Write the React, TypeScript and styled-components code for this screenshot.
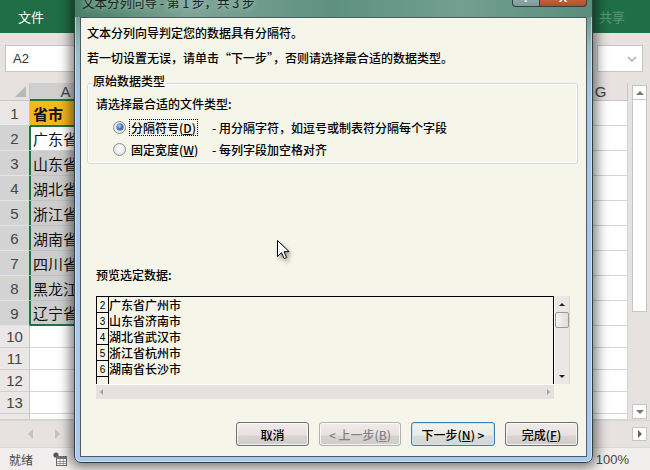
import React from 'react';
import styled, { createGlobalStyle, css } from 'styled-components';

const CJK = `"Noto Sans CJK SC", "Noto Sans", sans-serif`;
const LATIN = `"Liberation Sans", "Noto Sans CJK SC", sans-serif`;
const GREEN = '#217346';

const GlobalStyle = createGlobalStyle`
  html, body { margin: 0; padding: 0; background: #e7e2e0; }
  body { font-family: ${CJK}; overflow: hidden; }
  * { box-sizing: border-box; }
`;

const Screen = styled.div`
  position: relative;
  width: 650px;
  height: 470px;
  overflow: hidden;
  display: flex;
  flex-direction: column;
  background: #e7e2e0;
`;

/* ---------- Excel window ---------- */
const TabBar = styled.div`
  height: 33px;
  flex: none;
  background: #1f6e45;
  display: flex;
  align-items: center;
  padding: 0 25px 0 18px;
`;
const FileTab = styled.span`
  color: #fff;
  font-size: 13px;
  line-height: 16px;
`;
const ShareButton = styled.span`
  margin-left: auto;
  color: #5d977a;
  font-size: 13px;
`;

const FormulaBar = styled.div`
  height: 50px;
  flex: none;
  display: flex;
  align-items: flex-start;
  padding: 12px 7px 0 5px;
`;
const NameBox = styled.div`
  width: 95px;
  height: 27px;
  background: #fff;
  border: 1px solid #c6c6c6;
  font: 13px/25px ${LATIN};
  color: #333;
  padding-left: 7px;
`;
const FormulaBox = styled.div`
  margin-left: auto;
  width: 46px;
  height: 27px;
  background: #fff;
  border: 1px solid #c6c6c6;
  display: flex;
  align-items: center;
  justify-content: flex-end;
  padding-right: 5px;
`;

const SheetArea = styled.div`
  height: 337px;
  flex: none;
  display: flex;
`;
const Grid = styled.div`
  display: grid;
  grid-template-columns: 30px 72px 472px 54px;
  grid-template-rows: 18px repeat(9, 25px) repeat(4, 22px) 6px;
  background: #fff;
  overflow: hidden;
`;
const Corner = styled.div`
  background: #e7e2e0;
  border-right: 1px solid #c6c6c6;
  border-bottom: 1px solid #c6c6c6;
  display: flex;
  align-items: flex-end;
  justify-content: flex-end;
  padding: 0 3px 3px 0;
  &::after {
    content: '';
    width: 0;
    height: 0;
    border-left: 11px solid transparent;
    border-bottom: 11px solid #b8b8b8;
  }
`;
const ColHead = styled.div<{ $sel?: boolean }>`
  background: ${(p) => (p.$sel ? '#cfcfcf' : '#e7e2e0')};
  border-right: 1px solid #c6c6c6;
  border-bottom: ${(p) => (p.$sel ? `2px solid ${GREEN}` : '1px solid #c6c6c6')};
  font: 15px/1 ${LATIN};
  color: #444;
  display: flex;
  align-items: center;
  justify-content: center;
`;
const RowHead = styled.div<{ $sel?: boolean }>`
  background: ${(p) => (p.$sel ? '#d3d3d3' : '#ebe7e6')};
  border-right: 1px solid ${(p) => (p.$sel ? GREEN : '#c6c6c6')};
  border-bottom: 1px solid ${(p) => (p.$sel ? '#e4e4e4' : '#d0d0d0')};
  font: 15px/1 ${LATIN};
  color: #444;
  display: flex;
  align-items: center;
  justify-content: center;
`;
const Cell = styled.div<{ $tone?: 'plain' | 'title' | 'sel'; $selEdge?: 'top' | 'mid' | 'bottom' }>`
  border-right: 1px solid #d4d4d4;
  border-bottom: 1px solid #d4d4d4;
  background: #fff;
  font: 15px/1 ${CJK};
  color: #111;
  display: flex;
  align-items: center;
  padding-left: 3px;
  white-space: nowrap;
  overflow: hidden;
  ${(p) =>
    p.$tone === 'title' &&
    css`
      background: #f4b71c;
      font-weight: 700;
    `}
  ${(p) =>
    p.$tone === 'sel' &&
    css`
      background: #cdcdcd;
      border-bottom-color: #c0c0c0;
    `}
  ${(p) =>
    p.$selEdge === 'top' &&
    css`
      box-shadow: inset 1px 0 0 ${GREEN}, inset 0 1px 0 ${GREEN};
      border-top: 1px solid ${GREEN};
      margin-top: -1px;
    `}
  ${(p) =>
    p.$selEdge === 'mid' &&
    css`
      box-shadow: inset 1px 0 0 ${GREEN};
    `}
  ${(p) =>
    p.$selEdge === 'bottom' &&
    css`
      box-shadow: inset 1px 0 0 ${GREEN};
      border-bottom: 2px solid ${GREEN};
    `}
`;

const ExcelVScroll = styled.div`
  width: 22px;
  flex: none;
  display: flex;
  flex-direction: column;
  padding: 2px 3px 1px 4px;
`;
const ScrollBox = styled.div`
  width: 15px;
  height: 15px;
  background: #fdfdfd;
  border: 1px solid #c6c6c6;
  display: flex;
  align-items: center;
  justify-content: center;
`;
const ExcelThumb = styled.div`
  width: 15px;
  height: 212px;
  background: #fff;
  border: 1px solid #c6c6c6;
  border-top: none;
`;
const Spacer = styled.div`
  flex: 1;
`;

const Arrow = styled.span<{ $dir: 'up' | 'down' | 'left' | 'right'; $color?: string; $size?: number }>`
  width: 0;
  height: 0;
  display: block;
  ${(p) => {
    const s = p.$size ?? 4;
    const c = p.$color ?? '#666';
    switch (p.$dir) {
      case 'up':
        return css`border-left: ${s}px solid transparent; border-right: ${s}px solid transparent; border-bottom: ${s}px solid ${c};`;
      case 'down':
        return css`border-left: ${s}px solid transparent; border-right: ${s}px solid transparent; border-top: ${s}px solid ${c};`;
      case 'left':
        return css`border-top: ${s}px solid transparent; border-bottom: ${s}px solid transparent; border-right: ${s}px solid ${c};`;
      default:
        return css`border-top: ${s}px solid transparent; border-bottom: ${s}px solid transparent; border-left: ${s}px solid ${c};`;
    }
  }}
`;

const SheetTabBar = styled.div`
  height: 27px;
  flex: none;
  display: flex;
  align-items: center;
  padding: 0 3px 0 28px;
  gap: 22px;
  border-top: 1px solid #d8d4d2;
`;
const SheetRightBox = styled(ScrollBox)`
  margin-left: auto;
  height: 14px;
`;

const StatusBar = styled.div`
  height: 23px;
  flex: none;
  background: #f1eeed;
  border-top: 1px solid #dcd8d6;
  display: flex;
  align-items: center;
  padding: 0 21px 0 9px;
  font-size: 12px;
  color: #444;
`;
const StatusIcon = styled.svg`
  margin-left: 20px;
`;
const Zoom = styled.span`
  margin-left: auto;
  font: 13px ${LATIN};
  color: #444;
`;

/* ---------- Dialog ---------- */
const Dialog = styled.div`
  position: absolute;
  left: 74px;
  top: -12px;
  width: 519px;
  height: 475px;
  display: flex;
  flex-direction: column;
  border: 1px solid #2e3f44;
  border-radius: 7px;
  background: linear-gradient(
    180deg,
    #4f856e 0px,
    #6a998a 24px,
    #9bbcc6 60px,
    #a6c6ea 110px,
    #a9c9ee 100%
  );
  box-shadow: 0 0 12px 4px rgba(0, 0, 0, 0.5), inset 0 0 0 1px rgba(255, 255, 255, 0.45);
`;
const DialogTitle = styled.div`
  height: 28px;
  flex: none;
  display: flex;
  align-items: flex-start;
  padding: 0 5px 0 7px;
  border-radius: 6px 6px 0 0;
  background: linear-gradient(90deg, #467e66 0%, #7ea497 22%, #5f9180 50%, #739f90 75%, #5a8d7b 100%);
`;
const TitleText = styled.span`
  margin-top: 6px;
  font-size: 12.5px;
  line-height: 16px;
  color: #14231f;
  text-shadow: 0 0 6px rgba(225, 240, 232, 0.8);
  white-space: nowrap;
`;
const TitleButtons = styled.div`
  margin-left: auto;
  display: flex;
`;
const CaptionButton = styled.div<{ $close?: boolean }>`
  height: 18px;
  width: ${(p) => (p.$close ? 47 : 28)}px;
  border: 1px solid #33403e;
  border-top: none;
  display: flex;
  align-items: flex-end;
  justify-content: center;
  color: #fff;
  font: bold 12px/1 ${LATIN};
  padding-bottom: 2px;
  ${(p) =>
    p.$close
      ? css`
          background: linear-gradient(180deg, #e3a07e, #c0653f 60%, #a9502e);
          border-radius: 0 0 4px 0;
          border-left: none;
        `
      : css`
          background: linear-gradient(180deg, #a9c2bd, #7c9b95);
          border-radius: 0 0 0 4px;
        `}
`;

const Client = styled.div`
  flex: 1;
  margin: 0 5px 5px;
  background: #f5f5e9;
  border: 1px solid #4b5c63;
  padding: 5px 8px 0 6px;
  display: flex;
  flex-direction: column;
  font-weight: 500;
  color: #000;
`;
const Para = styled.div<{ $mt?: number }>`
  font-size: 12px;
  line-height: 20px;
  height: 20px;
  margin-top: ${(p) => p.$mt ?? 0}px;
  white-space: nowrap;
`;
const GroupBox = styled.div`
  position: relative;
  margin-top: 15px;
  width: 491px;
  height: 81px;
  border: 1px solid #cfdbe1;
  border-radius: 3px;
  box-shadow: inset 0 0 0 1px #ffffff;
  padding: 10px 0 0 8px;
`;
const Legend = styled.span`
  position: absolute;
  top: -10px;
  left: 4px;
  padding: 0 1px;
  background: #f5f5e9;
  font-size: 12px;
  line-height: 14px;
`;
const Prompt = styled.div`
  font-size: 12px;
  line-height: 20px;
  height: 20px;
`;
const RadioRow = styled.div<{ $first?: boolean }>`
  height: 22px;
  margin-top: ${(p) => (p.$first ? 2 : 0)}px;
  display: flex;
  align-items: center;
  padding-left: 17px;
  font-size: 12px;
  white-space: nowrap;
`;
const Radio = styled.span<{ $checked?: boolean }>`
  width: 13px;
  height: 13px;
  flex: none;
  border-radius: 50%;
  border: 1px solid #8e8f8f;
  background: radial-gradient(circle at 50% 40%, #ffffff 0%, #efefef 45%, #d2d2d2 100%);
  display: flex;
  align-items: center;
  justify-content: center;
  margin-right: 3px;
  &::after {
    content: '';
    display: ${(p) => (p.$checked ? 'block' : 'none')};
    width: 6px;
    height: 6px;
    border-radius: 50%;
    background: radial-gradient(circle at 40% 35%, #b4dcfb 0%, #3276c0 50%, #17407a 100%);
    box-shadow: 0 0 0 0.5px #1c3f6a;
  }
`;
const LabelCell = styled.span`
  width: 83px;
  flex: none;
  display: flex;
`;
const RadioLabel = styled.span<{ $focus?: boolean }>`
  line-height: 15px;
  padding: 0 1px;
  border: 1px dotted ${(p) => (p.$focus ? '#000' : 'transparent')};
`;
const Desc = styled.span``;

const PreviewLabel = styled.div`
  margin: 101px 0 0 9px;
  font-size: 12px;
  line-height: 20px;
  height: 20px;
`;
const Preview = styled.div`
  margin: 11px 0 0 9px;
  width: 474px;
  height: 103px;
  display: grid;
  grid-template-columns: 458px 16px;
  grid-template-rows: 88px 15px;
`;
const DataArea = styled.div`
  border: 1px solid #000;
  border-bottom: none;
  overflow: hidden;
  background: #f5f5e9;
`;
const DataRow = styled.div`
  display: flex;
  height: 16px;
`;
const RowNum = styled.div`
  width: 12px;
  flex: none;
  border-right: 1px solid #000;
  border-bottom: 1px solid #000;
  font: 10px/1 ${LATIN};
  display: flex;
  align-items: flex-end;
  justify-content: center;
  padding-bottom: 1px;
`;
const DataText = styled.div`
  font-size: 12px;
  line-height: 16px;
  white-space: nowrap;
`;
const HScroll = styled.div`
  background: #e6e0de;
  border-top: 1px solid #fff;
  display: flex;
  align-items: center;
  justify-content: space-between;
  padding: 0 4px 0 4px;
`;
const VScroll = styled.div`
  background: #ebe7e4;
  border-left: 1px solid #fff;
  border-right: 1px solid #dcd8d6;
  display: flex;
  flex-direction: column;
  align-items: center;
  padding: 7px 0 6px;
`;
const VThumb = styled.div`
  width: 14px;
  height: 16px;
  margin-top: 6px;
  border: 1px solid #9a9a9a;
  border-radius: 2px;
  background: linear-gradient(90deg, #f4f4f4, #dcdcdc);
`;
const ScrollCorner = styled.div`
  background: #f5f5e9;
`;

const ButtonRow = styled.div`
  margin-top: 23px;
  display: flex;
  justify-content: flex-end;
  gap: 10px;
`;
const Button = styled.button<{ $w: number; $variant?: 'default' | 'disabled' }>`
  width: ${(p) => p.$w}px;
  height: 24px;
  padding: 0;
  border-radius: 3px;
  border: 1px solid #707070;
  background: linear-gradient(180deg, #f0ecea 0%, #e7e2e0 55%, #d6d3d1 60%, #cfcccb 100%);
  box-shadow: inset 0 0 0 1px rgba(255, 255, 255, 0.75);
  font-family: ${CJK};
  font-weight: 500;
  font-size: 12px;
  color: #000;
  display: flex;
  align-items: center;
  justify-content: center;
  white-space: nowrap;
  ${(p) =>
    p.$variant === 'default' &&
    css`
      border-color: #3c7fb1;
      background: linear-gradient(180deg, #f3f3ed 0%, #ebebe6 55%, #dbdcdc 60%, #d4d6d8 100%);
      box-shadow: inset 0 0 0 1px #c4e5f6;
    `}
  ${(p) =>
    p.$variant === 'disabled' &&
    css`
      border-color: #adb2b5;
      color: #838383;
    `}
`;

const Cursor = styled.svg`
  position: absolute;
  left: 277px;
  top: 240px;
  filter: drop-shadow(2px 3px 2px rgba(0, 0, 0, 0.35));
`;

const provinces = ['广东省', '山东省', '湖北省', '浙江省', '湖南省', '四川省', '黑龙江', '辽宁省'];
const previewRows = [
  { n: '2', t: '广东省广州市' },
  { n: '3', t: '山东省济南市' },
  { n: '4', t: '湖北省武汉市' },
  { n: '5', t: '浙江省杭州市' },
  { n: '6', t: '湖南省长沙市' },
  { n: '', t: '' },
];

type Row = {
  n: string;
  text?: string;
  tone?: 'plain' | 'title' | 'sel';
  sel?: boolean;
  edge?: 'top' | 'mid' | 'bottom';
};

export default function App() {
  const rows: Row[] = [
    { n: '1', text: '省市', tone: 'title' },
    ...provinces.map<Row>((p, i) => ({
      n: String(i + 2),
      text: p,
      tone: i === 0 ? 'plain' : 'sel',
      sel: true,
      edge: i === 0 ? 'top' : i === provinces.length - 1 ? 'bottom' : 'mid',
    })),
    { n: '10' },
    { n: '11' },
    { n: '12' },
    { n: '13' },
    { n: '' },
  ];

  return (
    <Screen>
      <GlobalStyle />
      <TabBar>
        <FileTab>文件</FileTab>
        <ShareButton>共享</ShareButton>
      </TabBar>
      <FormulaBar>
        <NameBox>A2</NameBox>
        <FormulaBox>
          <svg width="10" height="6" viewBox="0 0 10 6">
            <path d="M1 1 L5 5 L9 1" fill="none" stroke="#a8a8a8" strokeWidth="1.4" />
          </svg>
        </FormulaBox>
      </FormulaBar>
      <SheetArea>
        <Grid>
          <Corner />
          <ColHead $sel>A</ColHead>
          <ColHead />
          <ColHead>G</ColHead>
          {rows.map((r, i) => (
            <React.Fragment key={i}>
              <RowHead $sel={r.sel}>{r.n}</RowHead>
              <Cell $tone={r.tone} $selEdge={r.edge}>
                {r.text}
              </Cell>
              <Cell />
              <Cell />
            </React.Fragment>
          ))}
        </Grid>
        <ExcelVScroll>
          <ScrollBox>
            <Arrow $dir="up" $color="#777" $size={4} />
          </ScrollBox>
          <ExcelThumb />
          <Spacer />
          <ScrollBox>
            <Arrow $dir="down" $color="#777" $size={4} />
          </ScrollBox>
        </ExcelVScroll>
      </SheetArea>
      <SheetTabBar>
        <Arrow $dir="left" $color="#c2c2c2" $size={5} />
        <Arrow $dir="right" $color="#c2c2c2" $size={5} />
        <SheetRightBox>
          <Arrow $dir="right" $color="#666" $size={4} />
        </SheetRightBox>
      </SheetTabBar>
      <StatusBar>
        <span>就绪</span>
        <StatusIcon width="14" height="14" viewBox="0 0 14 14">
          <circle cx="3" cy="3" r="2.6" fill="#555" />
          <rect x="3.5" y="4.5" width="10" height="9" fill="#fff" stroke="#666" />
          <rect x="3.5" y="4.5" width="10" height="2.5" fill="#777" />
          <path d="M3.5 9.5h10M3.5 11.5h10M7 7v6.5M10.3 7v6.5" stroke="#888" strokeWidth="0.8" />
        </StatusIcon>
        <Zoom>100%</Zoom>
      </StatusBar>

      <Dialog>
        <DialogTitle>
          <TitleText>文本分列向导 - 第 1 步，共 3 步</TitleText>
          <TitleButtons>
            <CaptionButton>?</CaptionButton>
            <CaptionButton $close>X</CaptionButton>
          </TitleButtons>
        </DialogTitle>
        <Client>
          <Para>文本分列向导判定您的数据具有分隔符。</Para>
          <Para $mt={5}>若一切设置无误，请单击“下一步”，否则请选择最合适的数据类型。</Para>
          <GroupBox>
            <Legend>原始数据类型</Legend>
            <Prompt>请选择最合适的文件类型:</Prompt>
            <RadioRow $first>
              <Radio $checked />
              <LabelCell>
                <RadioLabel $focus>
                  分隔符号(<u>D</u>)
                </RadioLabel>
              </LabelCell>
              <Desc>- 用分隔字符，如逗号或制表符分隔每个字段</Desc>
            </RadioRow>
            <RadioRow>
              <Radio />
              <LabelCell>
                <RadioLabel>
                  固定宽度(<u>W</u>)
                </RadioLabel>
              </LabelCell>
              <Desc>- 每列字段加空格对齐</Desc>
            </RadioRow>
          </GroupBox>
          <PreviewLabel>预览选定数据:</PreviewLabel>
          <Preview>
            <DataArea>
              {previewRows.map((r, i) => (
                <DataRow key={i}>
                  <RowNum>{r.n}</RowNum>
                  <DataText>{r.t}</DataText>
                </DataRow>
              ))}
            </DataArea>
            <VScroll>
              <Arrow $dir="up" $color="#222" $size={3.5} />
              <VThumb />
              <Spacer />
              <Arrow $dir="down" $color="#222" $size={3.5} />
            </VScroll>
            <HScroll>
              <Arrow $dir="left" $color="#a0a0a0" $size={3.5} />
              <Arrow $dir="right" $color="#a0a0a0" $size={3.5} />
            </HScroll>
            <ScrollCorner />
          </Preview>
          <ButtonRow>
            <Button $w={73}>取消</Button>
            <Button $w={82} $variant="disabled">
              &lt; 上一步(<u>B</u>)
            </Button>
            <Button $w={84} $variant="default">
              下一步(<u>N</u>) &gt;
            </Button>
            <Button $w={73}>
              完成(<u>F</u>)
            </Button>
          </ButtonRow>
        </Client>
      </Dialog>

      <Cursor width="16" height="22" viewBox="0 0 16 22">
        <path
          d="M0.5 0.5 V16.5 L4.5 12.6 L7.2 18.6 L9.6 17.5 L7 11.7 H12.2 Z"
          fill="#fff"
          stroke="#000"
          strokeWidth="1"
          strokeLinejoin="miter"
        />
      </Cursor>
    </Screen>
  );
}
